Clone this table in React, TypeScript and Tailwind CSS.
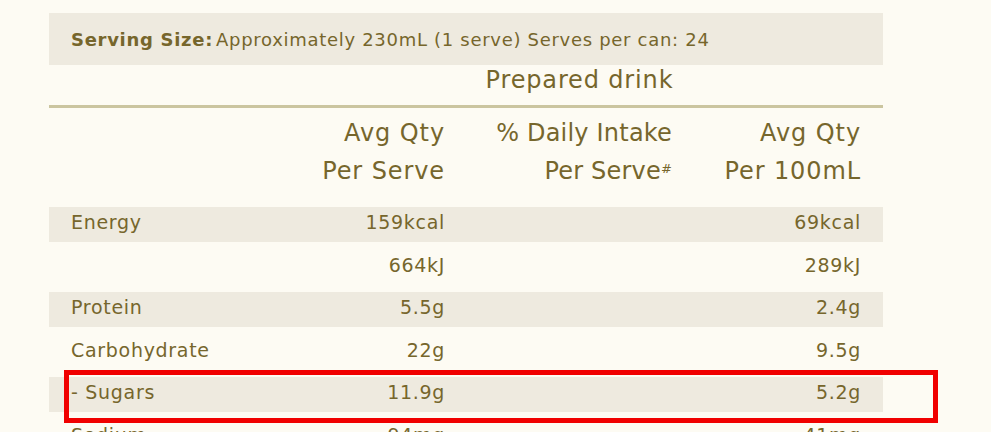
import React from "react";

const rows = [
  { label: "Energy", serve: "159kcal", daily: "", per100: "69kcal", shaded: true },
  { label: "", serve: "664kJ", daily: "", per100: "289kJ", shaded: false },
  { label: "Protein", serve: "5.5g", daily: "", per100: "2.4g", shaded: true },
  { label: "Carbohydrate", serve: "22g", daily: "", per100: "9.5g", shaded: false },
  { label: "- Sugars", serve: "11.9g", daily: "", per100: "5.2g", shaded: true },
  { label: "Sodium", serve: "94mg", daily: "", per100: "41mg", shaded: false },
];

const cols = "grid grid-cols-[220px_153px_227px_189px]";

export default function App() {
  return (
    <div
      className="relative h-[432px] w-[991px] overflow-hidden bg-[#fdfbf3] pl-[49px] pt-[13px] text-[#76662c]"
      style={{ fontFamily: "'DejaVu Sans', 'Open Sans', sans-serif" }}
    >
      <div className="w-[834px]">
        {/* Serving size band */}
        <div className="flex h-[52px] items-center bg-[#eeeadf] px-[22px] text-[18px] tracking-[0.7px]">
          <span className="font-bold">Serving Size:</span>
          <span className="ml-[3px]">Approximately 230mL (1 serve) Serves per can: 24</span>
        </div>

        {/* Prepared drink */}
        <div className={`${cols} h-[40px] px-[22px] text-[24px] leading-[30px] tracking-[0.85px]`}>
          <div className="col-start-2 col-span-3 pl-2 text-center">Prepared drink</div>
        </div>
        <div className="h-[3px] bg-[#cbc59f]" />

        {/* Column headings */}
        <div className={`${cols} px-[22px] pt-[6px] text-[24px] leading-[38px] tracking-[0.9px]`}>
          <div />
          <div className="-mr-[1px] text-right">
            Avg Qty
            <br />
            Per Serve
          </div>
          <div className="-mr-[1px] text-right tracking-[0.2px]">
            % Daily Intake
            <br />
            Per Serve<sup className="text-[13px]">#</sup>
          </div>
          <div className="-mr-[1px] text-right">
            Avg Qty
            <br />
            Per 100mL
          </div>
        </div>

        {/* Nutrient rows */}
        <div className="mt-[17px] flex flex-col gap-[7.5px] text-[19px] tracking-[0.7px]">
          {rows.map((r, i) => (
            <div
              key={i}
              className={`${cols} h-[35px] items-center px-[22px] pb-[4px] ${r.shaded ? "bg-[#eeeadf]" : ""}`}
            >
              <div>{r.label}</div>
              <div className="-mr-[1px] text-right">{r.serve}</div>
              <div className="-mr-[1px] text-right">{r.daily}</div>
              <div className="-mr-[1px] text-right">{r.per100}</div>
            </div>
          ))}
        </div>
      </div>

      {/* Highlight box */}
      <div className="absolute left-[64px] top-[370px] h-[53px] w-[874px] border-[5px] border-[#f00000]" />
    </div>
  );
}
